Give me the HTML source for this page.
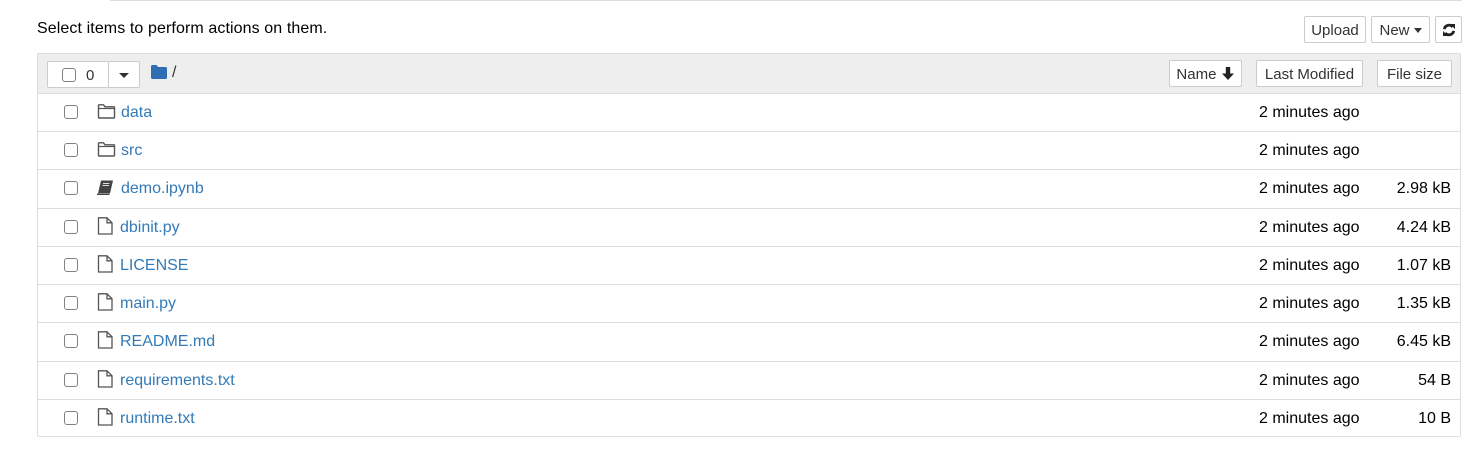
<!DOCTYPE html>
<html><head><meta charset="utf-8"><style>
*{box-sizing:border-box;margin:0;padding:0}
body{width:1483px;height:449px;background:#fff;font-family:"Liberation Sans",Arial,sans-serif;color:#000;position:relative;overflow:hidden}
.a{position:absolute}
.btn{position:absolute;border:1px solid #ccc;background:#fff;border-radius:2px;font-size:15px;color:#333;display:flex;align-items:center;justify-content:center;padding-top:1px}
.cb{position:absolute;width:14px;height:14px;border:1.5px solid #808080;border-radius:3px;background:#fff}
.row{position:absolute;left:37px;width:1424px;border-top:1px solid #ddd}
.name{position:absolute;font-size:16px;color:#337ab7;line-height:20px}
.mod{position:absolute;left:1259px;font-size:16px;line-height:20px}
.sz{position:absolute;right:32px;font-size:16px;line-height:20px;text-align:right}
</style></head><body>
<div class="a" style="left:110px;top:0;width:1352px;height:1px;background:#ddd"></div>
<div class="a" style="left:37px;top:19px;font-size:16px;line-height:20px;letter-spacing:0.1px">Select items to perform actions on them.</div>
<div class="btn" style="left:1304px;top:16px;width:62px;height:27px">Upload</div>
<div class="btn" style="left:1371px;top:16px;width:59px;height:27px">New<span style="display:inline-block;margin-left:4px;border-left:4px solid transparent;border-right:4px solid transparent;border-top:5px solid #333"></span></div>
<div class="btn" style="left:1435px;top:16px;width:27px;height:27px"><svg width="14" height="14" viewBox="0 0 14 14"><path d="M2.3 6.2A4.8 4.8 0 0 1 10.8 4" stroke="#222" stroke-width="2.8" fill="none"/><path d="M8 1L13 1L13 6Z" fill="#222"/><path d="M11.7 7.8A4.8 4.8 0 0 1 3.2 10" stroke="#222" stroke-width="2.8" fill="none"/><path d="M6 13L1 13L1 8Z" fill="#222"/></svg></div>

<div class="a" style="left:37px;top:53px;width:1424px;height:384px;border:1px solid #ddd;border-radius:2px"></div>
<div class="a" style="left:38px;top:54px;width:1422px;height:39px;background:#eee"></div>
<div class="btn" style="left:47px;top:61px;width:62px;height:27px;justify-content:flex-start;padding-left:14px"><span class="cb" style="position:relative;display:inline-block;margin-right:10px"></span>0</div>
<div class="btn" style="left:108px;top:61px;width:32px;height:27px"><span style="border-left:5px solid transparent;border-right:5px solid transparent;border-top:5px solid #333"></span></div>
<svg class="a" style="left:151px;top:65px" width="16" height="14" viewBox="0 0 16 14"><path d="M0 1.5Q0 0 1.5 0H5.5L7 2H14.5Q16 2 16 3.5V12.5Q16 14 14.5 14H1.5Q0 14 0 12.5Z" fill="#2f6eb5"/></svg>
<div class="a" style="left:172px;top:63px;font-size:16px;color:#333;line-height:20px">/</div>
<div class="btn" style="left:1169px;top:60px;width:73px;height:27px">Name&nbsp;<svg width="14" height="14" viewBox="0 0 14 14"><path d="M4.8 0H9.2V6.5H13L7 13L1 6.5H4.8Z" fill="#222"/></svg></div>
<div class="btn" style="left:1256px;top:60px;width:107px;height:27px">Last Modified</div>
<div class="btn" style="left:1377px;top:60px;width:75px;height:27px">File size</div>

<div class="row" style="top:93px"></div>
<div class="row" style="top:131px"></div>
<div class="row" style="top:169px"></div>
<div class="row" style="top:208px"></div>
<div class="row" style="top:246px"></div>
<div class="row" style="top:284px"></div>
<div class="row" style="top:322px"></div>
<div class="row" style="top:361px"></div>
<div class="row" style="top:399px"></div>

<div class="cb" style="left:64px;top:105px"></div>
<svg class="a" style="left:97px;top:104px" width="19" height="15" viewBox="0 0 19 15"><path d="M1.5 1.5Q1.5 0.8 2.2 0.8H6.5L8 2.8H16.8Q17.5 2.8 17.5 3.5V13.3Q17.5 14 16.8 14H2.2Q1.5 14 1.5 13.3Z" fill="none" stroke="#555" stroke-width="1.4"/><path d="M1.5 4.5H17.5" stroke="#555" stroke-width="1.2"/></svg>
<div class="name" style="left:121px;top:103px">data</div>
<div class="mod" style="top:103px">2 minutes ago</div>

<div class="cb" style="left:64px;top:143px"></div>
<svg class="a" style="left:97px;top:142px" width="19" height="15" viewBox="0 0 19 15"><path d="M1.5 1.5Q1.5 0.8 2.2 0.8H6.5L8 2.8H16.8Q17.5 2.8 17.5 3.5V13.3Q17.5 14 16.8 14H2.2Q1.5 14 1.5 13.3Z" fill="none" stroke="#555" stroke-width="1.4"/><path d="M1.5 4.5H17.5" stroke="#555" stroke-width="1.2"/></svg>
<div class="name" style="left:121px;top:141px">src</div>
<div class="mod" style="top:141px">2 minutes ago</div>

<div class="cb" style="left:64px;top:181px"></div>
<svg class="a" style="left:97px;top:180px" width="17" height="15" viewBox="0 0 17 15"><path d="M4 0.5H16L13 13.5H1Z" fill="#444"/><path d="M1 13.5L0.5 14.5H12.5" stroke="#444" stroke-width="1.2" fill="none"/><path d="M6 3.5H12.5M5.5 5.5H12" stroke="#ddd" stroke-width="1"/></svg>
<div class="name" style="left:121px;top:179px">demo.ipynb</div>
<div class="mod" style="top:179px">2 minutes ago</div><div class="sz" style="top:179px">2.98 kB</div>

<div class="cb" style="left:64px;top:220px"></div><svg class="a" style="left:97px;top:217px" width="17" height="18" viewBox="0 0 17 18"><path d="M1.5 0.8H10L15 5.8V17H1.5Z M10 0.8V5.8H15" fill="none" stroke="#555" stroke-width="1.3"/></svg><div class="name" style="left:120px;top:218px">dbinit.py</div><div class="mod" style="top:218px">2 minutes ago</div><div class="sz" style="top:218px">4.24 kB</div>
<div class="cb" style="left:64px;top:258px"></div><svg class="a" style="left:97px;top:255px" width="17" height="18" viewBox="0 0 17 18"><path d="M1.5 0.8H10L15 5.8V17H1.5Z M10 0.8V5.8H15" fill="none" stroke="#555" stroke-width="1.3"/></svg><div class="name" style="left:120px;top:256px">LICENSE</div><div class="mod" style="top:256px">2 minutes ago</div><div class="sz" style="top:256px">1.07 kB</div>
<div class="cb" style="left:64px;top:296px"></div><svg class="a" style="left:97px;top:293px" width="17" height="18" viewBox="0 0 17 18"><path d="M1.5 0.8H10L15 5.8V17H1.5Z M10 0.8V5.8H15" fill="none" stroke="#555" stroke-width="1.3"/></svg><div class="name" style="left:120px;top:294px">main.py</div><div class="mod" style="top:294px">2 minutes ago</div><div class="sz" style="top:294px">1.35 kB</div>
<div class="cb" style="left:64px;top:334px"></div><svg class="a" style="left:97px;top:331px" width="17" height="18" viewBox="0 0 17 18"><path d="M1.5 0.8H10L15 5.8V17H1.5Z M10 0.8V5.8H15" fill="none" stroke="#555" stroke-width="1.3"/></svg><div class="name" style="left:120px;top:332px">README.md</div><div class="mod" style="top:332px">2 minutes ago</div><div class="sz" style="top:332px">6.45 kB</div>
<div class="cb" style="left:64px;top:373px"></div><svg class="a" style="left:97px;top:370px" width="17" height="18" viewBox="0 0 17 18"><path d="M1.5 0.8H10L15 5.8V17H1.5Z M10 0.8V5.8H15" fill="none" stroke="#555" stroke-width="1.3"/></svg><div class="name" style="left:120px;top:371px">requirements.txt</div><div class="mod" style="top:371px">2 minutes ago</div><div class="sz" style="top:371px">54 B</div>
<div class="cb" style="left:64px;top:411px"></div><svg class="a" style="left:97px;top:408px" width="17" height="18" viewBox="0 0 17 18"><path d="M1.5 0.8H10L15 5.8V17H1.5Z M10 0.8V5.8H15" fill="none" stroke="#555" stroke-width="1.3"/></svg><div class="name" style="left:120px;top:409px">runtime.txt</div><div class="mod" style="top:409px">2 minutes ago</div><div class="sz" style="top:409px">10 B</div>
</body></html>
